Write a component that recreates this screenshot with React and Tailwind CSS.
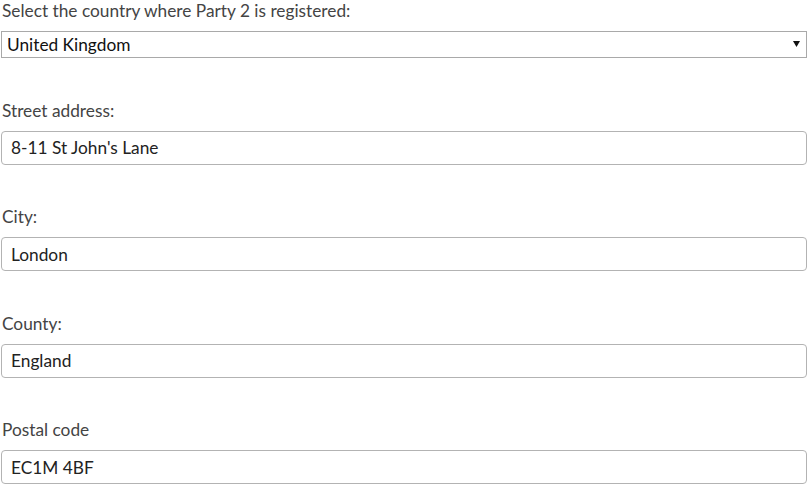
import { useState } from 'react';

const fields = [
  { label: 'Street address:', value: "8-11 St John's Lane" },
  { label: 'City:', value: 'London' },
  { label: 'County:', value: 'England' },
  { label: 'Postal code', value: 'EC1M 4BF' },
];

export default function App() {
  const [country, setCountry] = useState('United Kingdom');
  const [values, setValues] = useState(fields.map(f => f.value));

  return (
    <div className="w-[809px] h-[490px] bg-white overflow-hidden pl-[1px] pr-[2px] font-['Lato','Liberation_Sans',sans-serif] text-[17.3px]">
      {/* Country */}
      <div>
        <label className="block h-[22px] leading-[22px] pl-[1px] text-[#444]">
          Select the country where Party 2 is registered:
        </label>
        <div className="relative mt-[9px]">
          <select
            value={country}
            onChange={(e) => setCountry(e.target.value)}
            className="block w-full h-[27px] appearance-none border border-[#a9a9a9] bg-white pl-[5px] text-[#111] outline-none"
          >
            <option>United Kingdom</option>
            <option>United States</option>
            <option>Ireland</option>
          </select>
          <svg className="absolute right-[7px] top-[10px] w-[7px] h-[6px] pointer-events-none" viewBox="0 0 7 6">
            <path d="M0 0h7L3.5 6z" fill="#111" />
          </svg>
        </div>
      </div>

      {fields.map((f, i) => (
        <div key={f.label} className="mt-[41.5px]">
          <label className="block h-[22px] leading-[22px] pl-[1px] text-[#444]">{f.label}</label>
          <input
            type="text"
            value={values[i]}
            onChange={(e) => setValues(prev => prev.map((v, j) => (j === i ? e.target.value : v)))}
            className="mt-[9px] block w-full h-[34px] rounded-[4px] border border-[#b3b3b3] bg-white px-[9px] text-[#222] outline-none"
          />
        </div>
      ))}
    </div>
  );
}
